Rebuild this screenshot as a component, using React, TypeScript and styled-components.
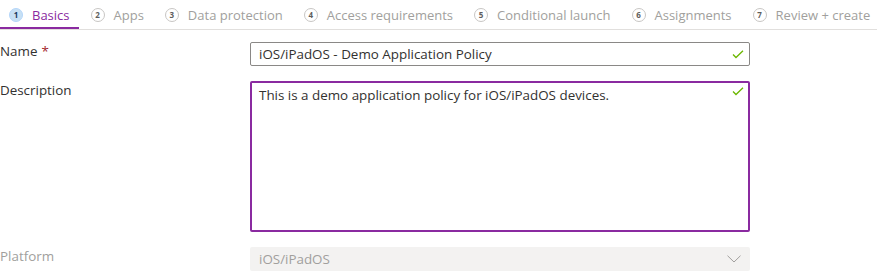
import React from "react";
import styled, { createGlobalStyle } from "styled-components";

const GlobalStyle = createGlobalStyle`
  body {
    margin: 0;
    background: #ffffff;
    font-family: "Segoe UI", "Open Sans", "Noto Sans", sans-serif;
    font-size: 13.4px;
    color: #323130;
  }
`;

const purple = "#8a2aa0";

const TabBar = styled.div`
  display: flex;
  gap: 3px;
  width: 877px;
  height: 29px;
  border-bottom: 1px solid #e1dfdd;
`;

const Tab = styled.div<{ $active?: boolean }>`
  position: relative;
  display: flex;
  align-items: center;
  gap: 9px;
  padding: 0 9px;
  font-size: 13px;
  white-space: nowrap;
  color: ${(p) => (p.$active ? purple : "#a19f9d")};

  &::after {
    content: "";
    display: ${(p) => (p.$active ? "block" : "none")};
    position: absolute;
    left: 0;
    right: 0;
    bottom: 0;
    height: 2px;
    background: ${purple};
  }
`;

const StepCircle = styled.span<{ $active?: boolean }>`
  display: flex;
  align-items: center;
  justify-content: center;
  width: 14px;
  height: 14px;
  box-sizing: border-box;
  border-radius: 50%;
  border: 1px solid ${(p) => (p.$active ? "#b4d6fa" : "#c8c6c4")};
  background: ${(p) => (p.$active ? "#c7e0f4" : "#ffffff")};
  color: ${(p) => (p.$active ? "#1b3a5c" : "#605e5c")};
  font-size: 8px;
  font-weight: 700;
  line-height: 1;
`;

const Form = styled.div`
  display: flex;
  flex-direction: column;
  gap: 15px;
  padding-top: 12px;
`;

const Row = styled.div`
  display: grid;
  grid-template-columns: 250px 500px;
`;

const Label = styled.div<{ $disabled?: boolean }>`
  font-size: 13.4px;
  line-height: 18px;
  color: ${(p) => (p.$disabled ? "#a19f9d" : "#323130")};
`;

const Required = styled.span`
  color: #a4262c;
  margin-left: 4px;
`;

const InputBox = styled.div`
  display: flex;
  align-items: center;
  justify-content: space-between;
  height: 24px;
  box-sizing: border-box;
  border: 1px solid #8a8886;
  border-radius: 2px;
  padding: 0 5px 0 8px;
  font-size: 13.4px;
`;

const TextBox = styled.div`
  display: flex;
  align-items: flex-start;
  justify-content: space-between;
  height: 151px;
  box-sizing: border-box;
  border: 2px solid ${purple};
  border-radius: 2px;
  padding: 4px 4px 0 7px;
  font-size: 13.4px;
  line-height: 16px;
`;

const DropBox = styled.div`
  display: flex;
  align-items: center;
  justify-content: space-between;
  height: 24px;
  box-sizing: border-box;
  border-radius: 2px;
  background: #f3f2f1;
  padding: 0 9px 0 9px;
  font-size: 13.4px;
  color: #a19f9d;
`;

const Check = () => (
  <svg width="12" height="9" viewBox="0 0 12 9">
    <polyline
      points="1,4.5 4,7.5 11,0.8"
      fill="none"
      stroke="#6bb700"
      strokeWidth="1.3"
    />
  </svg>
);

const Chevron = () => (
  <svg width="14" height="8" viewBox="0 0 14 8">
    <polyline
      points="0.5,0.7 7,7 13.5,0.7"
      fill="none"
      stroke="#a19f9d"
      strokeWidth="1"
    />
  </svg>
);

const steps = [
  "Basics",
  "Apps",
  "Data protection",
  "Access requirements",
  "Conditional launch",
  "Assignments",
  "Review + create",
];

export default function App() {
  return (
    <>
      <GlobalStyle />
      <TabBar>
        {steps.map((s, i) => (
          <Tab key={s} $active={i === 0}>
            <StepCircle $active={i === 0}>{i + 1}</StepCircle>
            {s}
          </Tab>
        ))}
      </TabBar>
      <Form>
        <Row>
          <Label>
            Name<Required>*</Required>
          </Label>
          <InputBox>
            <span>iOS/iPadOS - Demo Application Policy</span>
            <Check />
          </InputBox>
        </Row>
        <Row>
          <Label>Description</Label>
          <TextBox>
            <span>This is a demo application policy for iOS/iPadOS devices.</span>
            <Check />
          </TextBox>
        </Row>
        <Row>
          <Label $disabled>Platform</Label>
          <DropBox>
            <span>iOS/iPadOS</span>
            <Chevron />
          </DropBox>
        </Row>
      </Form>
    </>
  );
}
